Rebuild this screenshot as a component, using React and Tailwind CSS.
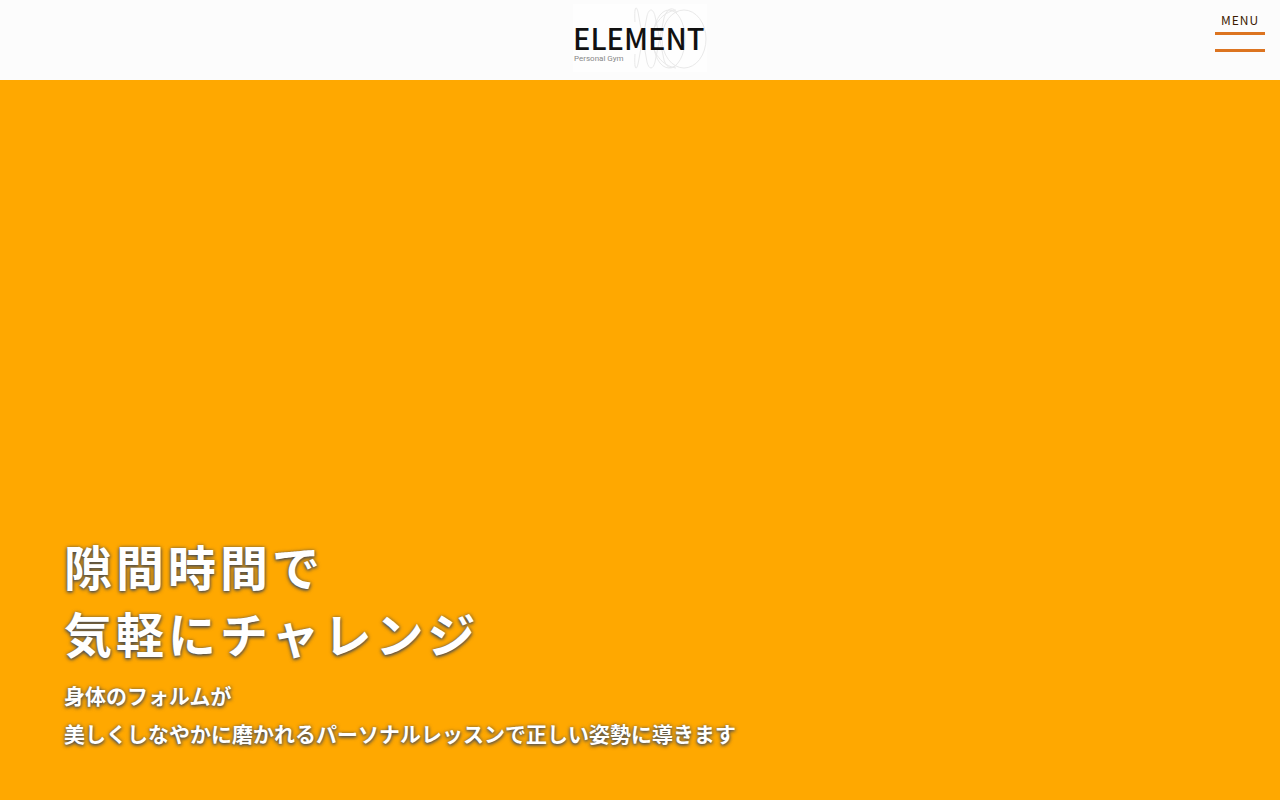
export default function App() {
  return (
    <div className="min-h-screen flex flex-col bg-[#ffa800] font-['Noto_Sans_CJK_JP',sans-serif]">
      <header className="h-20 shrink-0 grid grid-cols-[1fr_auto_1fr] items-start bg-[#fcfcfc]">
        <span />
        <a href="#top" aria-label="ELEMENT Personal Gym" className="mt-1">
          <svg viewBox="0 0 134 68" className="w-[134px] h-[68px] block">
            <rect width="134" height="68" fill="#fefefe" />
            <g fill="none" stroke="#e9e9e9" strokeWidth="1">
              <path d="M62 50c-1 14 1 18 3 10l9-48c2-8 6-8 8 0M62 18c-1-14 1-18 3-10l9 50c2 8 6 8 8 0l9-44c3-10 9-12 13-5M82 12l9 44c3 9 9 10 13 4" />
              <ellipse cx="96" cy="35" rx="16" ry="29" />
              <ellipse cx="111" cy="35" rx="22" ry="29" />
              <path d="M103 6c-14 2-24 16-24 29s10 27 24 29" />
            </g>
            <text x="0" y="46" fontSize="29" fontWeight="500" fill="#111" fontFamily="Noto Sans CJK JP">ELEMENT</text>
            <text x="1" y="57" fontSize="8" fill="#888" fontFamily="Roboto">Personal Gym</text>
          </svg>
        </a>
        <button type="button" className="justify-self-end mr-[15px] mt-3 w-[50px] flex flex-col items-center">
          <span className="text-xs leading-4 tracking-[1px] text-[#3b1a00]">MENU</span>
          <span className="mt-1 h-5 w-full border-y-3 border-[#dc7420]" />
        </button>
      </header>
      <main className="grow flex flex-col justify-end px-16 pb-12 text-white font-bold [text-shadow:0_1px_4px_#444,0_1px_3px_#666]">
        <h1 className="text-5xl leading-[67px] tracking-[4px]">隙間時間で<br />気軽にチャレンジ</h1>
        <p className="mt-[10px] text-[21px] leading-[38px]">身体のフォルムが<br />美しくしなやかに磨かれるパーソナルレッスンで正しい姿勢に導きます</p>
      </main>
    </div>
  );
}
